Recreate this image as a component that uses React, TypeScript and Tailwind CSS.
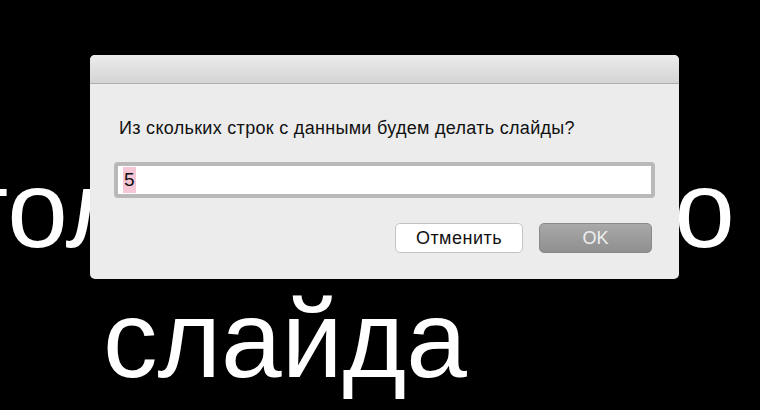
const sans = { fontFamily: '"Liberation Sans", Arial, sans-serif' }

const PromptDialog = () => (
  <div
    className="absolute left-[90px] top-[55px] w-[589px] h-[224px] flex flex-col bg-[#ececec] rounded-[5px] overflow-hidden"
    style={sans}
  >
    {/* title bar */}
    <div className="h-[29px] shrink-0 bg-gradient-to-b from-[#ececec] to-[#d4d4d4] border-b border-[#b0b0b0]" />
    <div className="flex flex-col pl-[24px] pr-[27px]">
      <p className="mt-[33px] ml-[5px] text-[18px] leading-[22px] tracking-[0.3px] text-[#111]">
        Из скольких строк с данными будем делать слайды?
      </p>
      <div className="mt-[23px] mr-[-3px] h-[36px] rounded-[4px] border-[4px] border-[#b9b9b9] bg-white flex items-center px-[5px]">
        <span className="bg-[#f5c6d6] text-[19px] leading-[26px] text-[#111] px-[1px]">5</span>
      </div>
      <div className="mt-[25px] flex justify-end gap-[16px]">
        <button className="w-[128px] h-[30px] rounded-[5px] border border-[#c2c2c2] bg-white text-[18px] tracking-[0.5px] text-[#111]">
          Отменить
        </button>
        <button className="w-[113px] h-[30px] rounded-[5px] border border-[#8a8a8a] bg-gradient-to-b from-[#a9a9a9] to-[#8f8f8f] text-[18px] text-[#eeeeee]">
          OK
        </button>
      </div>
    </div>
  </div>
)

export default function App() {
  return (
    <div className="relative w-[760px] h-[410px] bg-black overflow-hidden">
      <div className="flex flex-col text-white text-[109px] leading-[130px]" style={sans}>
        <div className="mt-[144px] flex justify-between whitespace-nowrap">
          <span className="ml-[-96px]">столбца</span>
          <span className="mr-[25px]">нового</span>
        </div>
        <div className="ml-[103px]">слайда</div>
      </div>
      <PromptDialog />
    </div>
  )
}
